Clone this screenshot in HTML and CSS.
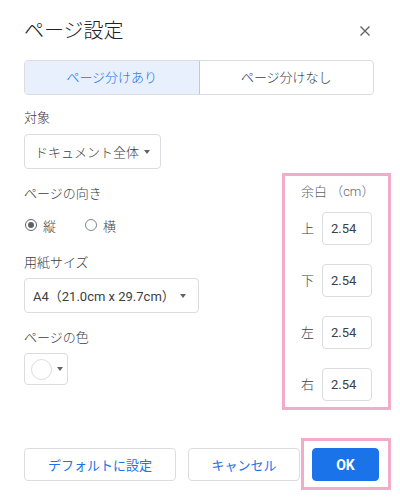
FILE: index.html
```html
<!DOCTYPE html>
<html lang="ja">
<head>
<meta charset="utf-8">
<link rel="stylesheet" href="styles.css">
</head>
<body>
<div class="dialog">
  <div class="header">
    <div class="title">ページ設定</div>
    <svg class="close" width="10" height="10" viewBox="0 0 10 10"><path d="M0.5 0.5L9.5 9.5M9.5 0.5L0.5 9.5" stroke="#5f6368" stroke-width="1.4" fill="none"/></svg>
  </div>
  <div class="toggle">
    <div class="seg seg-on">ページ分けあり</div>
    <div class="seg">ページ分けなし</div>
  </div>
  <div class="main">
    <div class="left">
      <div class="label first">対象</div>
      <div class="select select-target"><span>ドキュメント全体</span><span class="arrow"></span></div>
      <div class="label">ページの向き</div>
      <div class="radios">
        <div class="radio"><span class="circle on"></span><span>縦</span></div>
        <div class="radio"><span class="circle"></span><span>横</span></div>
      </div>
      <div class="label">用紙サイズ</div>
      <div class="select select-size"><span>A4（21.0cm x 29.7cm）</span><span class="arrow"></span></div>
      <div class="label">ページの色</div>
      <div class="color-btn"><span class="swatch"></span><span class="arrow"></span></div>
    </div>
    <div class="margins">
      <div class="m-title">余白 （cm）</div>
      <div class="m-row"><span class="m-label">上</span><div class="m-input">2.54</div></div>
      <div class="m-row"><span class="m-label">下</span><div class="m-input">2.54</div></div>
      <div class="m-row"><span class="m-label">左</span><div class="m-input">2.54</div></div>
      <div class="m-row"><span class="m-label">右</span><div class="m-input">2.54</div></div>
    </div>
  </div>
  <div class="footer">
    <div class="btn btn-default">デフォルトに設定</div>
    <div class="btn btn-cancel">キャンセル</div>
    <div class="ok-wrap"><div class="btn btn-ok">OK</div></div>
  </div>
</div>
</body>
</html>
```

FILE: styles.css
```css
html, body {
  margin: 0;
  padding: 0;
  background: #ffffff;
}
body {
  font-family: Roboto, "Noto Sans CJK JP", sans-serif;
  color: #3c4043;
  font-size: 13px;
  font-weight: 300;
}
.dialog {
  width: 400px;
  height: 500px;
  box-sizing: border-box;
  padding: 0 9px 0 24px;
}
.header {
  height: 60px;
  display: flex;
  align-items: center;
  justify-content: space-between;
  margin-right: 21px;
}
.title {
  font-size: 20px;
  line-height: 24px;
  color: #202124;
  padding-top: 2px;
}
.close {
  display: block;
  margin-top: 2px;
}
.toggle {
  display: flex;
  height: 35px;
  margin-right: 17px;
  box-sizing: border-box;
  border: 1px solid #dadce0;
  border-radius: 4px;
  overflow: hidden;
}
.seg {
  flex: 1;
  display: flex;
  align-items: center;
  justify-content: center;
  line-height: 16px;
  color: #3c4043;
}
.seg-on {
  background: #e8f0fe;
  color: #1a73e8;
  border-right: 1px solid #aecbfa;
}
.main {
  display: flex;
  justify-content: space-between;
  align-items: flex-start;
}
.label {
  line-height: 16px;
  margin-top: 17px;
  color: #3c4043;
}
.label.first {
  margin-top: 15px;
}
.select {
  margin-top: 8px;
  height: 35px;
  box-sizing: border-box;
  border: 1px solid #dadce0;
  border-radius: 4px;
  display: flex;
  align-items: center;
  justify-content: space-between;
  color: #3c4043;
}
.select-target {
  width: 137px;
  padding: 0 10px 0 10px;
}
.select-size {
  width: 175px;
  padding: 0 12px 0 8px;
  margin-top: 7px;
  font-weight: 400;
}
.arrow {
  width: 0;
  height: 0;
  border-left: 3.5px solid transparent;
  border-right: 3.5px solid transparent;
  border-top: 4px solid #5f6368;
}
.radios {
  display: flex;
  align-items: center;
  height: 20px;
  margin-top: 13px;
}
.radio {
  display: flex;
  align-items: center;
  gap: 6px;
  margin-right: 28px;
  padding-left: 1px;
}
.circle {
  width: 12px;
  height: 12px;
  box-sizing: border-box;
  border: 1px solid #80868b;
  border-radius: 50%;
  display: flex;
  align-items: center;
  justify-content: center;
}
.circle.on {
  border-color: #5f6368;
}
.circle.on::after {
  content: "";
  width: 6px;
  height: 6px;
  border-radius: 50%;
  background: #5f6368;
}
.radios + .label {
  margin-top: 20px;
}
.color-btn {
  margin-top: 7px;
  width: 44px;
  height: 32px;
  box-sizing: border-box;
  border: 1px solid #dadce0;
  border-radius: 4px;
  display: flex;
  align-items: center;
  padding-left: 6px;
  gap: 5px;
}
.swatch {
  width: 21px;
  height: 21px;
  box-sizing: border-box;
  border: 1px solid #dadce0;
  border-radius: 50%;
}
.margins {
  margin-top: 78px;
  width: 109px;
  box-sizing: border-box;
  border: 3px solid #f2abc9;
  padding: 8px 16px 6px 16px;
}
.m-title {
  line-height: 16px;
  color: #5f6368;
  white-space: nowrap;
}
.m-row {
  display: flex;
  align-items: center;
  margin-top: 19px;
}
.m-title + .m-row {
  margin-top: 12px;
}
.m-label {
  width: 12px;
  margin-right: 9px;
  line-height: 16px;
  color: #3c4043;
}
.m-input {
  width: 50px;
  height: 33px;
  box-sizing: border-box;
  border: 1px solid #dadce0;
  border-radius: 4px;
  display: flex;
  align-items: center;
  padding-left: 8px;
  color: #3c4043;
  font-weight: 400;
}
.footer {
  display: flex;
  align-items: center;
  margin-top: 28px;
}
.btn {
  height: 33px;
  box-sizing: border-box;
  border: 1px solid #dadce0;
  border-radius: 4px;
  display: flex;
  align-items: center;
  justify-content: center;
  color: #1a73e8;
  font-weight: 400;
}
.btn-default {
  width: 152px;
  margin-right: 12px;
}
.btn-cancel {
  width: 112px;
  margin-left: 0;
}
.ok-wrap {
  margin-left: 1px;
  border: 3px solid #f2abc9;
  padding: 7px 9px 6px 8px;
}
.btn-ok {
  width: 67px;
  background: #1a73e8;
  border-color: #1a73e8;
  color: #ffffff;
  font-weight: 700;
  font-size: 14px;
}
```
